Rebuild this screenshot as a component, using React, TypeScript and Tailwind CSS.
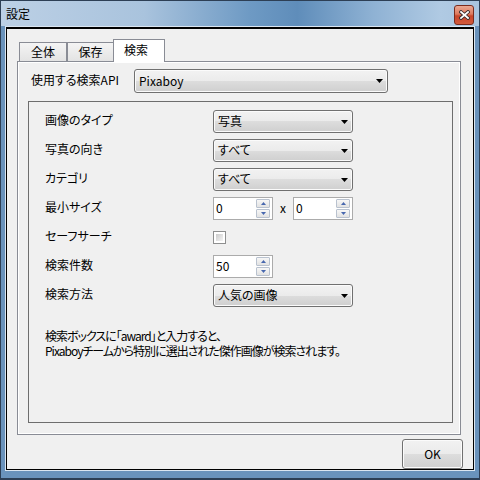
import React from "react";

const font = { fontFamily: '"Noto Sans CJK JP", "Noto Sans", sans-serif' };

function Arrow() {
  return (
    <svg width="7" height="4" viewBox="0 0 7 4" className="block">
      <polygon points="0,0 7,0 3.5,4" fill="#000" />
    </svg>
  );
}

function Combo({ text, className }: { text: string; className: string }) {
  return (
    <div
      className={
        "flex items-center justify-between rounded-[3px] border border-[#707070] bg-[linear-gradient(#f2f2f2_0%,#ebebeb_50%,#dddddd_50%,#cfcfcf_100%)] shadow-[inset_0_0_0_1px_#fbfbfb] pl-[4px] pr-[4px] " +
        className
      }
    >
      <span className="mb-[1px] leading-none">{text}</span>
      <Arrow />
    </div>
  );
}

function SpinBtn({ up }: { up?: boolean }) {
  return (
    <div className="flex h-[9px] w-[14px] items-center justify-center rounded-[1px] border border-[#b9c2cf] bg-[linear-gradient(#f7f7f7,#e2e2e2)]">
      <svg width="5" height="3" viewBox="0 0 5 3" className="block">
        <polygon points={up ? "0,3 5,3 2.5,0" : "0,0 5,0 2.5,3"} fill="#4767ae" />
      </svg>
    </div>
  );
}

function Spin({ value }: { value: string }) {
  return (
    <div className="flex h-[23px] w-[60px] items-center justify-between border border-[#ababab] bg-white pl-[2px] pr-[2px]">
      <span className="mb-[1px] leading-none">{value}</span>
      <div className="flex flex-col gap-[1px]">
        <SpinBtn up />
        <SpinBtn />
      </div>
    </div>
  );
}

function Row({ label, children }: { label: string; children: React.ReactNode }) {
  return (
    <div className="flex h-[23px] items-center">
      <div className="mb-[3px] w-[168px] leading-none">{label}</div>
      {children}
    </div>
  );
}

export default function App() {
  return (
    <div
      className="flex h-[480px] w-[480px] flex-col border border-b-2 border-[#2d3f55] bg-[#6a93bc] text-[12px] text-black [font-feature-settings:'palt']"
      style={font}
    >
      {/* title bar */}
      <div className="flex h-[25px] items-center justify-between bg-[linear-gradient(90deg,#bcd0e5_0%,#a9c3dd_30%,#6e9ac4_52%,#5f8dba_62%,#8fb2d4_78%,#b0cae3_92%,#a9c4de_100%)] pl-[5px] pr-[5px]">
        <span className="mt-[1px] leading-none">設定</span>
        <div className="mt-[3px] flex h-[20px] w-[20px] items-center justify-center rounded-[3px] border border-[#7a2c1e] bg-[linear-gradient(#eaa893_0%,#dd7a5e_45%,#c8452a_55%,#d25a3c_100%)]">
          <svg width="11" height="10" viewBox="0 0 11 10" className="block">
            <path d="M2 2 L9 8 M9 2 L2 8" stroke="#3a2a2a" strokeWidth="3.6" strokeLinecap="square" />
            <path d="M2 2 L9 8 M9 2 L2 8" stroke="#ffffff" strokeWidth="1.8" strokeLinecap="square" />
          </svg>
        </div>
      </div>

      {/* body */}
      <div className="mx-[4px] mb-[5px] border border-[#dbe6f1]">
        <div className="flex h-[443px] flex-col border border-t-2 border-black bg-[#f0f0f0] pl-[10px] pr-[10px] pt-[10px]">
          {/* tabs */}
          <div className="flex h-[22px] items-end pl-[2px]">
            <div className="flex h-[19px] w-[48px] items-center justify-center border border-b-0 border-[#898c95] bg-[linear-gradient(#f4f4f4,#e3e3e3)] leading-none">
              全体
            </div>
            <div className="flex h-[19px] w-[47px] items-center justify-center border border-b-0 border-[#898c95] bg-[linear-gradient(#f4f4f4,#e3e3e3)] leading-none">
              保存
            </div>
            <div className="relative z-10 -mb-px -ml-px flex h-[23px] w-[52px] items-start justify-center border border-b-0 border-[#898c95] bg-white pr-[6px] pt-[4px] leading-none">
              検索
            </div>
          </div>

          {/* panel */}
          <div className="flex h-[374px] w-[444px] flex-col border border-[#898c95] bg-[#f0f0f0] shadow-[inset_1px_1px_0_#ffffff,inset_-1px_-1px_0_#ffffff] pt-[7px]">
            <div className="flex items-center pl-[13px]">
              <div className="mb-[3px] w-[103px] leading-none">使用する検索API</div>
              <Combo text="Pixaboy" className="h-[24px] w-[254px]" />
            </div>

            <div className="ml-[10px] mt-[8px] flex h-[322px] w-[425px] flex-col border border-[#6d6d6d] pl-[16px] pt-[8px]">
              <div className="flex flex-col gap-[6px]">
                <Row label="画像のタイプ">
                  <Combo text="写真" className="h-[23px] w-[140px]" />
                </Row>
                <Row label="写真の向き">
                  <Combo text="すべて" className="h-[23px] w-[140px]" />
                </Row>
                <Row label="カテゴリ">
                  <Combo text="すべて" className="h-[23px] w-[140px]" />
                </Row>
                <Row label="最小サイズ">
                  <Spin value="0" />
                  <span className="mb-[2px] w-[20px] text-center leading-none">x</span>
                  <Spin value="0" />
                </Row>
                <Row label="セーフサーチ">
                  <div className="h-[13px] w-[13px] border border-[#8e8f8f] bg-white p-[2px]">
                    <div className="h-full w-full bg-[linear-gradient(135deg,#cbcbcb,#f4f4f4)]" />
                  </div>
                </Row>
                <Row label="検索件数">
                  <Spin value="50" />
                </Row>
                <Row label="検索方法">
                  <Combo text="人気の画像" className="h-[23px] w-[140px]" />
                </Row>
              </div>
              <div className="mt-[21px] leading-[15px] tracking-[-1px]">
                <div>検索ボックスに「award」と入力すると、</div>
                <div>Pixaboyチームから特別に選出された傑作画像が検索されます。</div>
              </div>
            </div>
          </div>

          {/* footer */}
          <div className="mt-[4px] flex justify-end">
            <div className="flex h-[30px] w-[61px] items-center justify-center rounded-[3px] border border-[#707070] bg-[linear-gradient(#f2f2f2_0%,#ebebeb_50%,#dddddd_50%,#cfcfcf_100%)] shadow-[inset_0_0_0_1px_#fbfbfb] leading-none">
              OK
            </div>
          </div>
        </div>
      </div>
    </div>
  );
}
